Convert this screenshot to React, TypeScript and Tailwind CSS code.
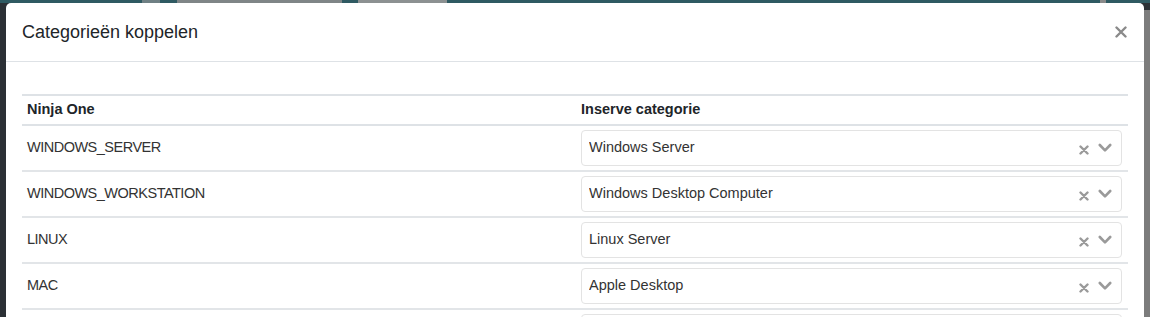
import React from "react";

const rows = [
  { ninja: "WINDOWS_SERVER", inserve: "Windows Server" },
  { ninja: "WINDOWS_WORKSTATION", inserve: "Windows Desktop Computer" },
  { ninja: "LINUX", inserve: "Linux Server" },
  { ninja: "MAC", inserve: "Apple Desktop" },
  { ninja: "", inserve: "" },
];

function ClearIcon() {
  return (
    <svg width="10" height="10" viewBox="0 0 10 10" className="text-[#9a9a9a]">
      <path d="M1.5 1.5 L8.5 8.5 M8.5 1.5 L1.5 8.5" stroke="currentColor" strokeWidth="2.4" strokeLinecap="round" />
    </svg>
  );
}

function ChevronIcon() {
  return (
    <svg width="14" height="10" viewBox="0 0 14 10" className="text-[#9a9a9a]">
      <path d="M1.8 2 L7 7.4 L12.2 2" stroke="currentColor" strokeWidth="2.6" fill="none" strokeLinecap="round" strokeLinejoin="round" />
    </svg>
  );
}

function CategorySelect({ value }: { value: string }) {
  return (
    <div className="flex h-[36px] items-center rounded-[4px] border border-[#e3e3e3] bg-white pl-[7px] pr-[9px]">
      <span className="flex-1 truncate text-[14.5px] text-[#333]">{value}</span>
      <div className="flex items-center gap-[9px]">
        <span className="mt-[3px]">
          <ClearIcon />
        </span>
        <ChevronIcon />
      </div>
    </div>
  );
}

export default function App() {
  return (
    <div
      className="relative h-[317px] w-[1150px] overflow-hidden bg-[#2b3035]"
      style={{ fontFamily: '"Liberation Sans", Arial, sans-serif' }}
    >
      {/* dimmed page behind the modal */}
      <div className="flex h-[3px] bg-[#2f5a62]">
        <div className="ml-[142px] h-full w-[18px] bg-[#6f8084]" />
        <div className="ml-[17px] h-full w-[165px] bg-[#7f8587]" />
        <div className="ml-[16px] h-full w-[89px] bg-[#8c9192]" />
        <div className="ml-[653px] h-full w-[6px] bg-[#8a8a8a]" />
      </div>
      <div className="absolute right-0 top-[10px] h-full w-[6px] bg-[#7c7c7c]" />

      {/* modal */}
      <div className="absolute left-[6px] top-[3px] w-[1138px] rounded-t-[5px] bg-white">
        <div className="flex h-[59px] items-center justify-between border-b border-[#dee2e6] pl-[16px] pr-[17px]">
          <h2 className="text-[18px] text-[#212529]">Categorieën koppelen</h2>
          <svg width="12" height="12" viewBox="0 0 12 12" className="text-[#8a8a8a]">
            <path d="M1.5 1.5 L10.5 10.5 M10.5 1.5 L1.5 10.5" stroke="currentColor" strokeWidth="2.4" strokeLinecap="round" />
          </svg>
        </div>
        <div className="px-[16px] pt-[32px]">
          <table className="w-full border-collapse text-[14.5px] text-[#333]">
            <thead>
              <tr className="border-t-2 border-b-2 border-[#dee2e6]">
                <th className="h-[30px] w-1/2 px-[5px] py-0 text-left font-bold text-[#212529]">Ninja One</th>
                <th className="h-[30px] w-1/2 px-[6px] py-0 text-left font-bold text-[#212529]">Inserve categorie</th>
              </tr>
            </thead>
            <tbody>
              {rows.map((r, i) => (
                <tr key={i} className="border-b-2 border-[#e2e5e8]">
                  <td className="h-[44px] px-[5px] align-middle tracking-[-0.5px]">{r.ninja}</td>
                  <td className="px-[6px] py-[4px]">
                    <CategorySelect value={r.inserve} />
                  </td>
                </tr>
              ))}
            </tbody>
          </table>
        </div>
      </div>
    </div>
  );
}
